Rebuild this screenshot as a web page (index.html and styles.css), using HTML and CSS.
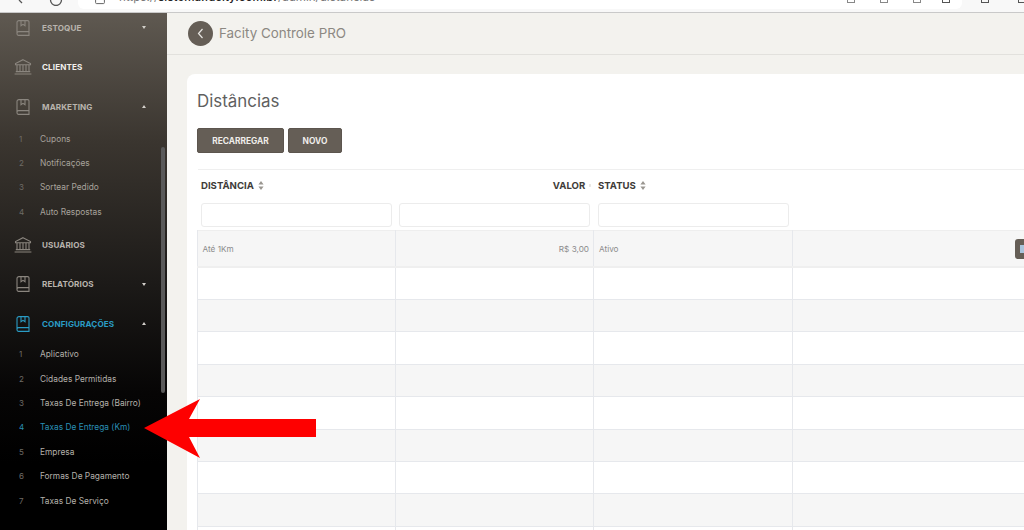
FILE: index.html
```html
<!DOCTYPE html>
<html lang="pt-BR">
<head>
<meta charset="utf-8">
<title>Distâncias</title>
<link rel="stylesheet" href="styles.css">
</head>
<body>
<svg class="defs" width="0" height="0" aria-hidden="true">
  <symbol id="i-book" viewBox="0 0 14 16"><path d="M3 .6h8.6a1.4 1.4 0 0 1 1.4 1.4v13.4H2.6A1.6 1.6 0 0 1 1 13.8V2.6A2 2 0 0 1 3 .6zM1 13.2a1.6 1.6 0 0 1 1.6-1.6H13M5 .8v5l2-1.4 2 1.4v-5" fill="none" stroke="currentColor" stroke-width="1.1"/></symbol>
  <symbol id="i-bank" viewBox="0 0 18 16"><path d="M9 .7 16.5 4.6v1.2h-15V4.6zM3 5.8v6.4M6 5.8v6.4M9 5.8v6.4M12 5.8v6.4M15 5.8v6.4M1.8 12.6h14.4M.6 15h16.8" fill="none" stroke="currentColor" stroke-width="1.1"/></symbol>
  <symbol id="i-sort" viewBox="0 0 6 9"><path d="M3 0l2.6 3.4H.4zM3 9 .4 5.6h5.2z" fill="currentColor"/></symbol>
</svg>
<div class="toolbar">
  <svg class="tb-icon tb-back" width="12" height="6" viewBox="0 0 12 6"><path d="M7 3 4 0" stroke="#555" stroke-width="1.3" fill="none"/></svg>
  <svg class="tb-icon tb-reload" width="14" height="6" viewBox="0 0 14 6"><path d="M1.5 0a5.5 5.5 0 0 0 11 0" stroke="#555" stroke-width="1.3" fill="none"/></svg>
  <div class="address">
    <svg class="tb-lock" width="10" height="5" viewBox="0 0 10 5"><path d="M.6 0v2.6a1 1 0 0 0 1 1h6.8a1 1 0 0 0 1-1V0" stroke="#666" fill="none"/></svg>
    <span class="url">https://<b>sistema.facity.com.br</b>/admin/distancias</span>
    <span class="addr-icons">
      <i class="tick"></i><i class="tick"></i><i class="tick"></i><i class="tick tick-dark tick-last"></i>
    </span>
  </div>
  <span class="tb-end"><i class="tick tick-dark"></i><i class="tick tick-dark"></i></span>
</div>
<div class="app">
  <aside class="sidebar">
    <nav class="nav">
      <a class="nav-item"><svg class="ico"><use href="#i-book"/></svg><span class="nav-label">ESTOQUE</span><span class="caret"></span></a>
      <a class="nav-item nav-bright"><svg class="ico ico-bank"><use href="#i-bank"/></svg><span class="nav-label">CLIENTES</span></a>
      <a class="nav-item"><svg class="ico"><use href="#i-book"/></svg><span class="nav-label">MARKETING</span><span class="caret caret-up"></span></a>
      <ul class="sub">
        <li><span class="num">1</span>Cupons</li>
        <li><span class="num">2</span>Notificações</li>
        <li><span class="num">3</span>Sortear Pedido</li>
        <li><span class="num">4</span>Auto Respostas</li>
      </ul>
      <a class="nav-item"><svg class="ico ico-bank"><use href="#i-bank"/></svg><span class="nav-label">USUÁRIOS</span></a>
      <a class="nav-item"><svg class="ico"><use href="#i-book"/></svg><span class="nav-label">RELATÓRIOS</span><span class="caret"></span></a>
      <a class="nav-item nav-active"><svg class="ico"><use href="#i-book"/></svg><span class="nav-label">CONFIGURAÇÕES</span><span class="caret caret-up"></span></a>
      <ul class="sub sub-tight">
        <li><span class="num">1</span>Aplicativo</li>
        <li><span class="num">2</span>Cidades Permitidas</li>
        <li><span class="num">3</span>Taxas De Entrega (Bairro)</li>
        <li class="sub-active"><span class="num">4</span>Taxas De Entrega (Km)</li>
        <li><span class="num">5</span>Empresa</li>
        <li><span class="num">6</span>Formas De Pagamento</li>
        <li><span class="num">7</span>Taxas De Serviço</li>
      </ul>
    </nav>
    <div class="scrollbar"></div>
  </aside>
  <main class="main">
    <header class="topbar">
      <span class="back"><svg width="7" height="11" viewBox="0 0 7 11"><path d="M5.5 1 1.5 5.5l4 4.5" fill="none" stroke="#e8e6e2" stroke-width="1.2"/></svg></span>
      <h2 class="app-title">Facity Controle PRO</h2>
    </header>
    <section class="card">
      <h1 class="page-title">Distâncias</h1>
      <div class="actions">
        <button class="btn btn-reload">RECARREGAR</button>
        <button class="btn btn-new">NOVO</button>
      </div>
      <table class="grid">
        <colgroup><col class="c1"><col class="c2"><col class="c3"><col class="c4"></colgroup>
        <thead>
          <tr class="head-row">
            <th>DISTÂNCIA <svg class="sort"><use href="#i-sort"/></svg></th>
            <th class="right">VALOR <svg class="sort sort-thin"><use href="#i-sort"/></svg></th>
            <th class="status">STATUS <svg class="sort"><use href="#i-sort"/></svg></th>
            <th></th>
          </tr>
          <tr class="filter-row">
            <th><input class="filter" type="text"></th>
            <th><input class="filter" type="text"></th>
            <th class="status"><input class="filter" type="text"></th>
            <th></th>
          </tr>
        </thead>
        <tbody>
          <tr class="row-first"><td>Até 1Km</td><td class="right">R$ 3,00</td><td>Ativo</td><td class="right"><span class="row-btn"><i class="row-btn-icon"></i></span></td></tr>
          <tr><td></td><td></td><td></td><td></td></tr>
          <tr><td></td><td></td><td></td><td></td></tr>
          <tr><td></td><td></td><td></td><td></td></tr>
          <tr><td></td><td></td><td></td><td></td></tr>
          <tr><td></td><td></td><td></td><td></td></tr>
          <tr><td></td><td></td><td></td><td></td></tr>
          <tr><td></td><td></td><td></td><td></td></tr>
          <tr><td></td><td></td><td></td><td></td></tr>
          <tr><td></td><td></td><td></td><td></td></tr>
        </tbody>
      </table>
    </section>
  </main>
</div>
<svg class="arrow" width="174" height="61" viewBox="0 0 174 61"><path d="M0 29 56 0 45 20H172V38H45L56 59z" fill="#fe0000"/></svg>
</body>
</html>
```
FILE: styles.css
```css
* { box-sizing: border-box; }
html, body { margin: 0; height: 530px; overflow: hidden; }
body {
  position: relative;
  width: 1024px;
  display: flex;
  flex-direction: column;
  font-family: Inter, "Open Sans", "Liberation Sans", sans-serif;
  background: #f3f2ee;
}
.defs { position: absolute; }

/* browser chrome, cropped at the top of the photo */
.toolbar {
  flex: 0 0 13px;
  display: flex;
  background: #f8f8f8;
  border-bottom: 1px solid #c9c9c9;
  overflow: hidden;
  padding-left: 15px;
}
.tb-icon { flex: none; display: block; }
.tb-back { margin-right: 22px; }
.tb-reload { margin-right: 15px; }
.address {
  flex: 0 0 884px;
  height: 9px;
  display: flex;
  background: #fff;
  border-bottom-right-radius: 6px;
  border-bottom-left-radius: 6px;
  padding-left: 17px;
}
.tb-lock { flex: none; margin-right: 14px; }
.url {
  font-size: 11.6px;
  line-height: 14px;
  margin-top: -10px;
  color: #7a7a7a;
  white-space: nowrap;
}
.url b { color: #222; font-weight: 500; }
.addr-icons { margin-left: auto; display: flex; gap: 25px; padding-right: 12px; }
.tick { display: block; width: 8px; height: 3px; border: 1px solid #888; border-top: 0; }
.tick-dark { border-color: #555; }
.tick-last { margin-left: -4px; }
.tb-end { display: flex; gap: 29px; margin-left: 19px; }

.app { flex: 1; min-height: 0; display: flex; }

/* sidebar */
.sidebar {
  flex: 0 0 167px;
  position: relative;
  overflow: hidden;
  background: linear-gradient(180deg, #5f5951 0, #3a352f 130px, #1c1a18 270px, #060505 380px, #000 450px);
  color: #bdb9b3;
}
.nav { margin-top: -5px; }
.nav-item {
  height: 39.5px;
  display: flex;
  align-items: center;
  padding-left: 16px;
  color: #b9b4ae;
}
.ico { width: 14px; height: 16px; color: #8b867f; flex: none; margin-right: 12px; }
.ico-bank { width: 18px; margin-left: -2px; margin-right: 10px; }
.nav-label { font-size: 8.1px; font-weight: 700; white-space: nowrap; letter-spacing: .1px; }
.nav-bright { color: #f1efec; }
.nav-active { color: #2a9cc5; }
.nav-active .ico { color: #2a9cc5; }
.caret {
  margin-left: auto;
  margin-right: 21px;
  width: 0; height: 0;
  border: 2.5px solid transparent;
  border-top: 3px solid #d2cfca;
  border-bottom: 0;
}
.caret-up { border-top: 0; border-bottom: 3px solid #d2cfca; }
.sub { list-style: none; margin: 0 0 1px; padding: 0; }
.sub-tight { margin-top: -1.5px; }
.sub li {
  height: 24.4px;
  display: flex;
  align-items: center;
  font-size: 8.35px;
  white-space: nowrap;
  color: #a8a39c;
}
.sub-tight li { color: #b4b0aa; }
.sub li.sub-active { color: #2a8fb5; }
.num { width: 40px; padding-left: 19px; flex: none; font-size: 8px; color: #6f6b66; }
.sub-active .num { color: #2a8fb5; }
.scrollbar {
  position: absolute;
  left: 161px;
  top: 134px;
  width: 4px;
  height: 246px;
  border-radius: 2px;
  background: #5a5a5a;
}

/* main */
.main { flex: 1; min-width: 0; overflow: hidden; }
.topbar {
  height: 42px;
  display: flex;
  align-items: center;
  padding-left: 21px;
  gap: 6px;
  border-bottom: 1px solid #e2e1dd;
}
.back {
  width: 25px; height: 25px;
  border-radius: 50%;
  background: #655e56;
  display: flex;
  align-items: center;
  justify-content: center;
  margin-top: -1px;
}
.app-title { margin: -2px 0 0; font-size: 13.4px; font-weight: 400; color: #8c8882; white-space: nowrap; }
.card {
  margin: 19px 0 0 20px;
  width: 873px;
  background: #fff;
  border-radius: 8px 0 0 0;
  padding: 0 10px;
  height: 500px;
}
.page-title {
  margin: 0;
  padding-top: 17px;
  height: 54px;
  font-size: 16.9px;
  line-height: 21px;
  font-weight: 400;
  color: #5f5f5f;
}
.actions { display: flex; gap: 4px; height: 41px; }
.btn {
  height: 25px;
  border: 1px solid #5c554e;
  border-radius: 2px;
  background: #655e56;
  color: #efedea;
  font-family: inherit;
  font-size: 8.4px;
  font-weight: 700;
  padding: 0;
}
.btn-reload { width: 87px; }
.btn-new { width: 54px; }
.grid {
  table-layout: fixed;
  width: 853px;
  border-collapse: collapse;
  border-top: 1px solid #efefef;
  font-size: 8.2px;
  color: #8b8b8b;
}
.c1, .c2 { width: 198px; }
.c3 { width: 199px; }
.head-row { height: 27px; }
.head-row th {
  font-size: 9.6px;
  font-weight: 700;
  color: #3e3b38;
  text-align: left;
  padding: 5px 3px 0 3.5px;
  white-space: nowrap;
}
.head-row th.right { text-align: right; padding-right: 3px; }
.head-row th.status, .filter-row th.status { padding-left: 4.5px; }
.sort { width: 6px; height: 9px; color: #9a9690; margin-left: 2px; vertical-align: -1px; }
.sort-thin { width: 2px; margin-left: 1px; color: #c4beb6; }
.filter-row { height: 33.5px; }
.filter-row th { padding: 6px 3px 3.5px 3.5px; vertical-align: top; }
.filter {
  display: block;
  width: 191px;
  height: 24px;
  border: 1px solid #ececec;
  border-radius: 3px;
  background: #fff;
}
.grid tbody tr { height: 32.4px; }
.grid tbody tr.row-first { height: 36.6px; }
.grid tbody tr:nth-child(odd) { background: #f6f6f6; }
.grid td {
  border: 1px solid #e6e8ec;
  padding: 0 4px 0 5px;
  white-space: nowrap;
}
.grid .row-first td { border-top: 1px solid #eeeeee; border-bottom: 2px solid #efefef; }
.grid td:first-child { padding-left: 4.5px; }
.grid td.right { text-align: right; }
.row-btn {
  display: inline-block;
  width: 30px;
  height: 20px;
  margin-top: 1px;
  border-radius: 3px;
  background: #655e56;
  vertical-align: middle;
  padding: 6px 0 0 5px;
}
.row-btn-icon { display: block; width: 5px; height: 8px; background: #a9c4dc; }

/* red annotation arrow laid over the screenshot */
.arrow { position: absolute; left: 144px; top: 398.5px; }
```
